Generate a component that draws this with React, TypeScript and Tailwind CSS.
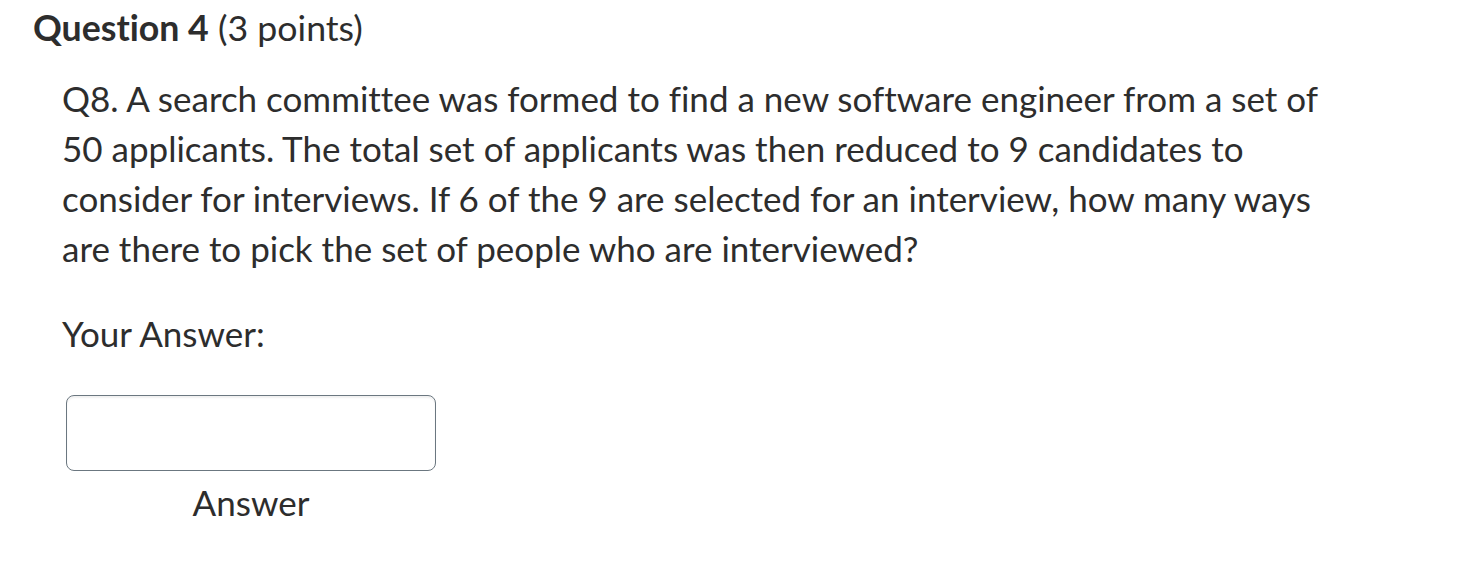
import React from 'react';

export default function App() {
  return (
    <div className="min-h-[578px] w-[1466px] bg-white font-['Lato',sans-serif] text-[#2d2d2d] [font-variant-ligatures:none]">
      <div className="px-[33px] pt-[6px]">
        <h2 className="text-[35.7px] leading-[44px]">
          <span className="font-bold">Question 4</span> <span>(3 points)</span>
        </h2>
      </div>
      <div className="pl-[62px] pt-[23px]">
        <p className="w-[1300px] text-[35px] leading-[50px]">
          Q8. A search committee was formed to find a new software engineer from a set of 50 applicants. The total set of
          applicants was then reduced to 9 candidates to consider for interviews. If 6 of the 9 are selected for an
          interview, how many ways are there to pick the set of people who are interviewed?
        </p>
        <div className="pt-[35px] text-[35px] leading-[50px]">Your Answer:</div>
        <div className="mt-[37px] ml-[4px] flex w-[370px] flex-col items-center">
          <input
            type="text"
            aria-label="Answer"
            className="h-[76px] w-[370px] rounded-[8px] border border-[#6b7780] bg-white shadow-[inset_0_2px_2px_rgba(0,0,0,0.06)] outline-none"
          />
          <div className="pt-[11px] text-[35px] leading-[40px]">Answer</div>
        </div>
      </div>
    </div>
  );
}
